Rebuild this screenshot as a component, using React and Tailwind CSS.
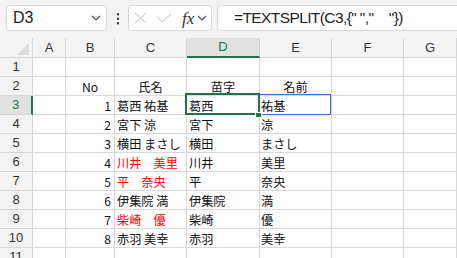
import React from "react";

const rows = [
  { no: "1", full: "葛西 祐基", last: "葛西", first: "祐基" },
  { no: "2", full: "宮下 涼", last: "宮下", first: "涼" },
  { no: "3", full: "横田 まさし", last: "横田", first: "まさし" },
  { no: "4", full: "川井　美里", last: "川井", first: "美里", red: true },
  { no: "5", full: "平　奈央", last: "平", first: "奈央", red: true },
  { no: "6", full: "伊集院 満", last: "伊集院", first: "満" },
  { no: "7", full: "柴崎　優", last: "柴崎", first: "優", red: true },
  { no: "8", full: "赤羽 美幸", last: "赤羽", first: "美幸" },
];

const cols = ["A", "B", "C", "D", "E", "F", "G"];

const Chevron = ({ className }) => (
  <svg className={className} width="10" height="6" viewBox="0 0 10 6" fill="none">
    <path d="M1 1l4 4 4-4" stroke="#555" strokeWidth="1.2" />
  </svg>
);

const cell = "h-[19px] border-r border-b border-[#d9d9d9] bg-white overflow-visible whitespace-nowrap leading-[20px] text-[12.2px] text-[#111]";
const rowHead = "h-[19px] border-r border-b border-[#d6d6d6] bg-[#f3f3f3] flex items-center justify-center text-[13px] text-[#333]";
const jp = " font-['Noto_Sans_CJK_JP',sans-serif]";

export default function App() {
  return (
    <div className="w-[457px] h-[258px] overflow-hidden bg-[#f3f3f3] font-['Liberation_Sans',sans-serif]">
      {/* formula bar */}
      <div className="h-[38px] flex items-start pt-[5px] pl-[6px]">
        <div className="w-[101px] h-[26px] bg-white border border-[#d9d9d9] rounded-[4px] flex items-center pl-[6px] pr-[5px]">
          <span className="text-[16px] text-[#222]">D3</span>
          <Chevron className="ml-auto" />
        </div>
        <svg className="ml-[9px] mt-[7px]" width="4" height="14" viewBox="0 0 4 14">
          <rect x="1" y="1" width="2" height="2.4" fill="#444" />
          <rect x="1" y="5.6" width="2" height="2.4" fill="#444" />
          <rect x="1" y="10" width="2" height="2.4" fill="#444" />
        </svg>
        <div className="ml-[8px] w-[84px] h-[26px] bg-white border border-[#d9d9d9] rounded-[4px] flex items-center pl-[5px]">
          <svg width="13" height="12" viewBox="0 0 13 12" fill="none">
            <path d="M1 1l11 10M12 1L1 11" stroke="#c4c4c4" strokeWidth="1" />
          </svg>
          <svg className="ml-[9px]" width="16" height="10" viewBox="0 0 16 10" fill="none">
            <path d="M1 4l5 5 9-8" stroke="#c4c4c4" strokeWidth="1" />
          </svg>
          <span className="ml-[10px] font-['Liberation_Serif',serif] italic text-[17px] text-[#333] leading-none">fx</span>
          <Chevron className="ml-[3px]" />
        </div>
        <div className="ml-[5px] flex-1 h-[26px] bg-white border border-r-0 border-[#d9d9d9] rounded-l-[4px] flex items-center pl-[16px] whitespace-nowrap">
          <span className="text-[15.5px] tracking-[-0.6px] text-[#222]">=TEXTSPLIT(C3,{"{"}" ","　"{"}"})</span>
        </div>
      </div>

      {/* sheet */}
      <div className="relative grid grid-cols-[33px_33px_49px_72px_73px_72px_72px_1fr]">
        {/* header row */}
        <div className="h-[20px] border-r border-b border-[#d6d6d6] bg-[#f3f3f3] relative">
          <svg className="absolute left-[17px] top-[5px]" width="12" height="12" viewBox="0 0 12 12">
            <path d="M12 0V12H0Z" fill="#dcdcdc" />
          </svg>
        </div>
        {cols.map((c) => (
          <div
            key={c}
            className={
              c === "D"
                ? "h-[20px] border-r border-b-2 border-r-[#d6d6d6] border-b-[#217346] bg-[#e1e1e1] flex items-center justify-center text-[13px] text-[#217346]"
                : "h-[20px] border-r border-b border-[#d6d6d6] bg-[#f3f3f3] flex items-center justify-center text-[13px] text-[#333]"
            }
          >
            {c}
          </div>
        ))}

        {/* row 1 */}
        <div className={rowHead}>1</div>
        {cols.map((c) => (
          <div key={"r1" + c} className={cell} />
        ))}

        {/* row 2 */}
        <div className={rowHead}>2</div>
        <div className={cell} />
        <div className={cell + " text-center" + jp}>No</div>
        <div className={cell + " text-center" + jp}>氏名</div>
        <div className={cell + " text-center" + jp}>苗字</div>
        <div className={cell + " text-center" + jp}>名前</div>
        <div className={cell} />
        <div className={cell} />

        {rows.map((r, i) => (
          <React.Fragment key={r.no}>
            <div
              className={
                i === 0
                  ? "h-[19px] border-r-2 border-b border-r-[#217346] border-b-[#d6d6d6] bg-[#e1e1e1] flex items-center justify-center text-[13px] text-[#217346]"
                  : rowHead
              }
            >
              {i + 3}
            </div>
            <div className={cell} />
            <div className={cell + " text-right pr-[3px]" + jp}>{r.no}</div>
            <div className={cell + " pl-[2px]" + jp + (r.red ? " !text-[#ff0000]" : "")}>
              {r.full}
            </div>
            <div className={cell + " pl-[2px]" + jp}>{r.last}</div>
            <div className={cell + " pl-[1px]" + jp}>{r.first}</div>
            <div className={cell} />
            <div className={cell} />
          </React.Fragment>
        ))}

        {/* row 11 */}
        <div className={rowHead}>11</div>
        {cols.map((c) => (
          <div key={"r11" + c} className={cell} />
        ))}

        {/* E3 blue outline */}
        <div className="absolute left-[259px] top-[56px] w-[72px] h-[21px] border border-[#3a6fc6] shadow-[0_1px_4px_rgba(0,0,0,0.12)]" />
        {/* D3 selection */}
        <div className="absolute left-[185px] top-[55px] w-[75px] h-[22px] border-2 border-[#217346]" />
        <div className="absolute left-[255px] top-[74px] w-[7px] h-[6px] bg-[#217346] border border-white" />
      </div>
    </div>
  );
}
